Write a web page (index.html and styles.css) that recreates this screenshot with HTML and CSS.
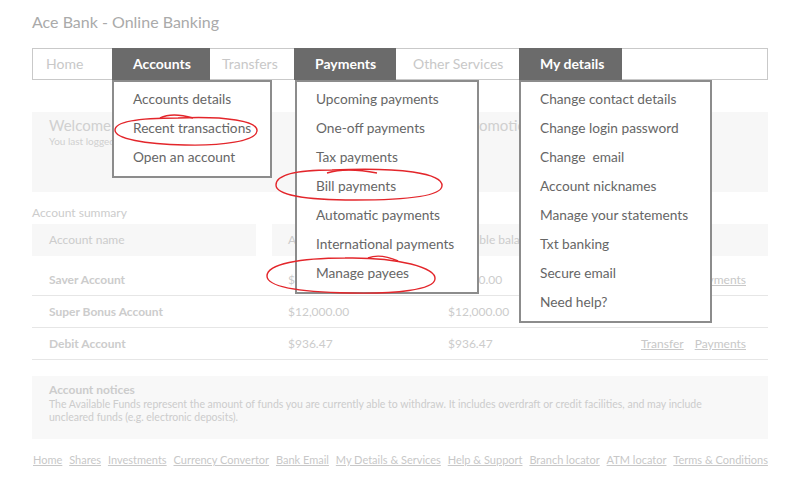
FILE: index.html
```html
<!DOCTYPE html>
<html lang="en">
<head>
  <meta charset="UTF-8" />
  <title>Ace Bank - Online Banking</title>
  <link rel="stylesheet" href="styles.css">
</head>
<body>
  <div class="page">
    <h1 class="title">Ace Bank - Online Banking</h1>

    <nav class="nav">
      <div class="tab tab-home">Home</div>
      <div class="tab tab-accounts active">Accounts
        <ul class="menu menu-accounts">
          <li>Accounts details</li>
          <li>Recent transactions</li>
          <li>Open an account</li>
        </ul>
      </div>
      <div class="tab tab-transfers">Transfers</div>
      <div class="tab tab-payments active">Payments
        <ul class="menu menu-payments">
          <li>Upcoming payments</li>
          <li>One-off payments</li>
          <li>Tax payments</li>
          <li>Bill payments</li>
          <li>Automatic payments</li>
          <li>International payments</li>
          <li>Manage payees</li>
        </ul>
      </div>
      <div class="tab tab-other">Other Services</div>
      <div class="tab tab-details active">My details
        <ul class="menu menu-details">
          <li>Change contact details</li>
          <li>Change login password</li>
          <li>Change&nbsp; email</li>
          <li>Account nicknames</li>
          <li>Manage your statements</li>
          <li>Txt banking</li>
          <li>Secure email</li>
          <li>Need help?</li>
        </ul>
      </div>
    </nav>

    <div class="panels">
      <div class="panel">
        <div class="panel-title">Welcome Alex Johnson</div>
        <div class="panel-sub">You last logged in on 12 March at 9:41am</div>
      </div>
      <div class="panel">
        <div class="panel-title">Promotions</div>
      </div>
    </div>

    <div class="summary-label">Account summary</div>
    <div class="table-head">
      <div class="cell cell-name">Account name</div>
      <div class="cell">Account balance</div>
      <div class="cell">Available balance</div>
      <div class="cell"></div>
    </div>
    <div class="table-row">
      <div class="name">Saver Account</div>
      <div>$4,520.00</div>
      <div>$4,520.00</div>
      <div class="actions"><a href="#">Transfer</a><a href="#">Payments</a></div>
    </div>
    <div class="table-row">
      <div class="name">Super Bonus Account</div>
      <div>$12,000.00</div>
      <div>$12,000.00</div>
      <div class="actions"></div>
    </div>
    <div class="table-row">
      <div class="name">Debit Account</div>
      <div>$936.47</div>
      <div>$936.47</div>
      <div class="actions"><a href="#">Transfer</a><a href="#">Payments</a></div>
    </div>

    <div class="notices">
      <div class="notices-title">Account notices</div>
      <p>The Available Funds represent the amount of funds you are currently able to withdraw. It includes overdraft or credit facilities, and may include uncleared funds (e.g. electronic deposits).</p>
    </div>

    <footer class="footer">
      <a href="#">Home</a>
      <a href="#">Shares</a>
      <a href="#">Investments</a>
      <a href="#">Currency Convertor</a>
      <a href="#">Bank Email</a>
      <a href="#">My Details &amp; Services</a>
      <a href="#">Help &amp; Support</a>
      <a href="#">Branch locator</a>
      <a href="#">ATM locator</a>
      <a href="#">Terms &amp; Conditions</a>
    </footer>

    <!-- red pen marks -->
    <svg class="marks" width="800" height="480" viewBox="0 0 800 480">
      <path d="M160,118 Q172,112 193,118"/>
      <path d="M178,118 C226,116 258,121 257,131 C256,141 222,146 185,145 C145,144 115,139 115,130 C115,121 140,118 178,118"/>
      <path d="M327,173 Q346,167 377,173"/>
      <path d="M332,170 C400,167 443,173 442,186 C441,197 400,200 355,200 C305,200 276,195 276,185 C276,174 300,170 332,170"/>
      <path d="M368,258 Q380,253 398,261"/>
      <path d="M345,258 C400,257 436,268 435,279 C434,290 395,294 350,293 C300,292 267,287 267,276 C267,264 300,258 345,258"/>
    </svg>
  </div>
</body>
</html>
```

FILE: styles.css
```css
*, *::before, *::after { box-sizing: border-box; }
body {
  margin: 0;
  background: #fff;
  font-family: Lato, "Open Sans", sans-serif;
  color: #ccc;
}
.page {
  position: relative;
  width: 800px; height: 480px;
  padding: 0 32px;
  overflow: hidden;
}
.title {
  margin: 0; padding-top: 12px; height: 48px;
  font-size: 16px; font-weight: 400; line-height: 20px;
  color: #aaa;
}

/* top nav */
.nav {
  display: flex;
  height: 32px;
  border: 1px solid #c9c9c9;
}
.tab {
  position: relative;
  height: 30px; line-height: 29px;
  padding-left: 13px;
  font-size: 14px; color: #c8c8c8;
}
.tab.active {
  height: 32px; line-height: 31px; margin: -1px 0;
  padding-left: 21px;
  background: #6b6b6b; color: #fff; font-weight: 700;
}
.tab-home { width: 79px; }
.tab-accounts { width: 98px; }
.tab-transfers { width: 84px; padding-left: 12px; }
.tab-payments { width: 102px; }
.tab-other { width: 123px; padding-left: 17px; }
.tab-details { width: 103px; }

/* dropdown menus */
.menu {
  position: absolute; top: 100%; left: 0; z-index: 2;
  margin: 0; padding: 2px 0 5px; list-style: none;
  background: #fff; border: 2px solid #8c8c8c;
  font-weight: 400;
}
.menu li {
  padding-left: 19px;
  line-height: 29px; font-size: 13.7px; color: #666;
  white-space: nowrap;
}
.menu-accounts { width: 160px; }
.menu-payments { width: 184px; left: 1px; }
.menu-details { width: 193px; }

/* welcome / promotions */
.panels {
  display: grid; grid-template-columns: 400px 1fr; gap: 16px;
  margin-top: 32px;
}
.panel {
  height: 80px; padding: 4px 17px;
  background: #f7f7f7;
}
.panel-title { font-size: 15px; line-height: 19px; color: #d0d0d0; }
.panel-sub { font-size: 10px; line-height: 13px; color: #d0d0d0; }

/* account summary */
.summary-label {
  margin-top: 13px; font-size: 12px; line-height: 16px;
}
.table-head, .table-row {
  display: grid;
  grid-template-columns: 224px 144px 144px 1fr;
  column-gap: 16px;
  font-size: 12px;
}
.table-head { margin-top: 3px; margin-bottom: 8px; }
.cell {
  height: 32px; line-height: 32px; padding-left: 16px;
  background: #f7f7f7;
}
.cell-name { padding-left: 17px; }
.table-row {
  height: 32px; line-height: 31px;
  border-bottom: 1px solid #e6e6e6;
}
.table-row > div { padding-left: 16px; }
.table-row .name { padding-left: 17px; font-weight: 700; }
.table-row .actions {
  display: flex; justify-content: flex-end; gap: 11px;
  padding-right: 22px;
}
a { color: #c8c8c8; text-decoration: underline; }

/* notices */
.notices {
  margin-top: 16px; height: 63px;
  padding: 6px 17px 0;
  background: #f8f8f8;
}
.notices-title { font-size: 12px; line-height: 16px; font-weight: 700; }
.notices p {
  margin: 0; font-size: 10.5px; line-height: 13px;
  width: 680px;
}

/* footer links */
.footer {
  display: flex; justify-content: space-between;
  margin-top: 13px; padding-left: 1px;
  font-size: 11px; line-height: 16px;
}

.marks {
  position: absolute; top: 0; left: 0; z-index: 3;
  pointer-events: none;
  fill: none; stroke: #e3262b; stroke-width: 1.4;
}
```
